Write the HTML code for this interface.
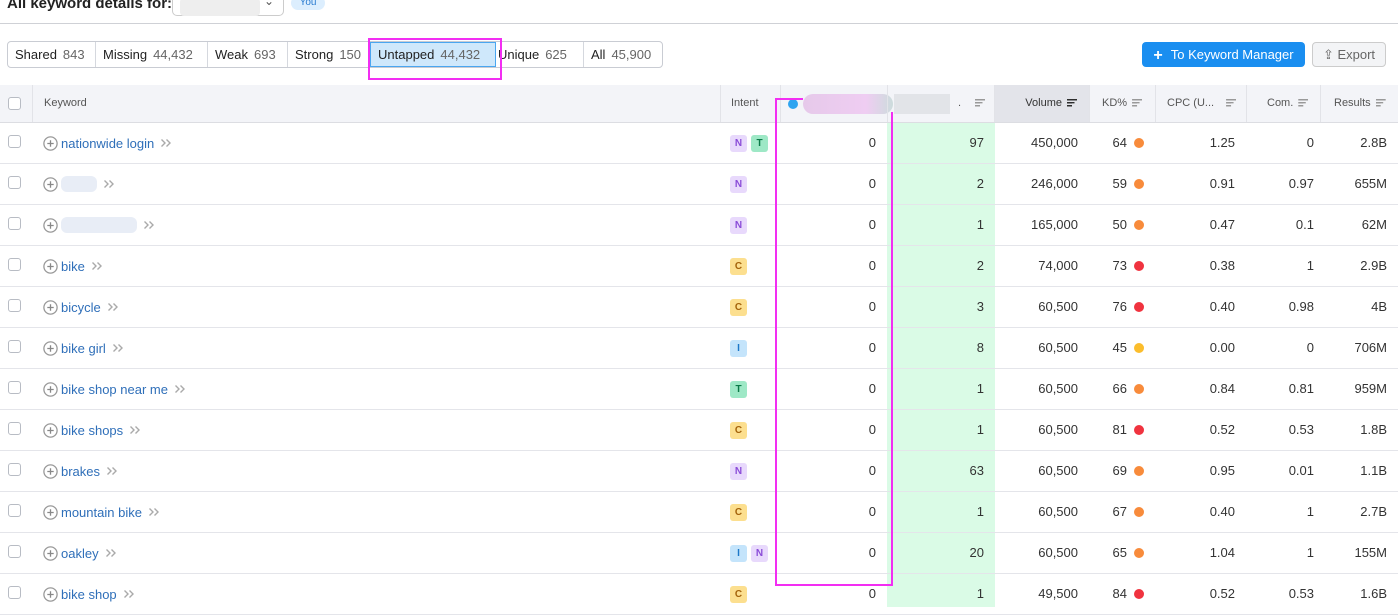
<!DOCTYPE html><html><head><style>
*{box-sizing:border-box;margin:0;padding:0}
body{width:1398px;height:607px;overflow:hidden;background:#fff;font-family:"Liberation Sans",sans-serif;font-size:13px;color:#333;position:relative}
.a{position:absolute}
.tabs{left:7px;top:41px;height:27px;border:1px solid #c9ccd3;border-radius:4px;background:#fff;width:656px}
.tab{position:absolute;top:0;height:25px;line-height:25px;border-right:1px solid #d5d8de;color:#222;white-space:nowrap;padding-left:7px}
.tab span{color:#666;margin-left:6px}
.tab.act{background:#cfe8fb;border:1px solid #4aa6f0;top:0;height:25px;line-height:23px}
.hdr{left:0;top:85px;width:1398px;height:38px;background:#f3f4f8;border-bottom:1px solid #dcdde2}
.hc{position:absolute;top:0;height:37px;line-height:37px;font-size:11px;color:#555;border-left:1px solid #e2e3e8}
.row{position:absolute;left:0;width:1398px;height:41px;border-bottom:1px solid #e4e5ea}
.cb{position:absolute;left:8px;width:13px;height:13px;border:1px solid #b8bcc4;border-radius:3px;background:#fff}
.c{position:absolute;top:0;line-height:40px;text-align:right;font-size:13px;color:#333}
.kw{position:absolute;left:43px;top:0;height:40px;display:flex;align-items:center;color:#2f6fb9;font-size:13px}
.kw svg{display:block}
.b{position:absolute;top:12px;width:17px;height:17px;border-radius:3px;font-size:10px;font-weight:bold;text-align:center;line-height:17px}
.N{background:#e8d9fc;color:#8a4bd8}.T{background:#9ee8c6;color:#0b7a48}.C{background:#fcdf8f;color:#a4630b}.I{background:#c4e4fb;color:#1d78c8}
.dot{display:inline-block;width:10px;height:10px;border-radius:50%;margin-left:7px;vertical-align:-1px}
.sort{display:inline-block;width:10px;height:8px;margin-left:5px;vertical-align:-1px;background:linear-gradient(#999 0 1.5px,transparent 1.5px 3px,#999 3px 4.5px,transparent 4.5px 6px,#999 6px 7.5px,transparent 0) ;clip-path:polygon(0 0,100% 0,100% 20%,75% 20%,75% 55%,50% 55%,50% 100%,0 100%)}
</style></head><body>
<div class="a" style="left:7px;top:-5px;font-weight:bold;font-size:15px;color:#222">All keyword details for:</div>
<div class="a" style="left:172px;top:-8px;width:112px;height:24px;border:1px solid #ccc;border-radius:5px;background:#fff"></div>
<div class="a" style="left:180px;top:-2px;width:80px;height:18px;background:#eee;border-radius:4px"></div>
<div class="a" style="left:264px;top:-6px;font-size:12px;color:#555">⌄</div>
<div class="a" style="left:291px;top:-4px;width:34px;height:14px;background:#dceefe;border-radius:7px;color:#2a7bd0;font-size:10px;text-align:center;line-height:14px">You</div>
<div class="a" style="left:0;top:23px;width:1398px;height:1px;background:#cfd1d6"></div>
<div class="a tabs">
<div class="tab" style="left:0;width:88px">Shared<span>843</span></div>
<div class="tab" style="left:88px;width:112px">Missing<span>44,432</span></div>
<div class="tab" style="left:200px;width:80px">Weak<span>693</span></div>
<div class="tab" style="left:280px;width:82px">Strong<span>150</span></div>
<div class="tab act" style="left:362px;width:126px">Untapped<span>44,432</span></div>
<div class="tab" style="left:488px;width:88px;padding-left:2px">Unique<span>625</span></div>
<div class="tab" style="left:576px;width:78px;border-right:0">All<span>45,900</span></div>
</div>
<div class="a" style="left:368px;top:38px;width:134px;height:42px;border:2px solid #f22ef2"></div>
<div class="a" style="left:1142px;top:42px;width:163px;height:25px;background:#1a8ef0;border-radius:4px;color:#fff;font-size:13px;line-height:25px;text-align:center"><b style="font-size:16px;vertical-align:-1px;margin-right:8px">+</b>To Keyword Manager</div>
<div class="a" style="left:1312px;top:42px;width:74px;height:25px;background:#f3f4f6;border:1px solid #ccc;border-radius:4px;color:#666;line-height:23px;text-align:center">⇪ Export</div>
<div class="a hdr">
<div class="cb" style="top:12px"></div>
<div class="hc" style="left:32px;width:688px;padding-left:11px">Keyword</div>
<div class="hc" style="left:720px;width:60px;padding-left:10px">Intent</div>
<div class="hc" style="left:780px;width:107px"><span class="a" style="left:7px;top:14px;width:10px;height:10px;border-radius:50%;background:#2ea4f0"></span><span class="a" style="left:22px;top:9px;width:90px;height:20px;border-radius:10px;background:linear-gradient(90deg,#e6c9ea,#efcdf2 70%,#ccdcdc)"></span></div>
<div class="hc" style="left:887px;width:107px"><span class="a" style="left:6px;top:9px;width:56px;height:20px;background:#e2e4e8"></span><span class="a" style="left:70px;top:0">.</span><span class="a" style="left:82px;top:0"><span class="sort"></span></span></div>
<div class="hc" style="left:994px;width:95px;background:#e3e4ea;text-align:right;padding-right:12px;color:#333">Volume<span class="sort" style="filter:brightness(.3)"></span></div>
<div class="hc" style="left:1089px;width:66px;padding-left:12px">KD%<span class="sort"></span></div>
<div class="hc" style="left:1155px;width:91px;padding-left:11px">CPC (U...<span class="sort" style="margin-left:12px"></span></div>
<div class="hc" style="left:1246px;width:74px;padding-left:20px">Com.<span class="sort"></span></div>
<div class="hc" style="left:1320px;width:78px;padding-left:13px">Results<span class="sort"></span></div>
</div>
<div class="a" style="left:887px;top:123px;width:108px;height:484px;background:#dafbe6"></div>
<div id="rows"></div>
<div class="a" style="left:775px;top:98px;width:2px;height:488px;background:#f22ef2"></div>
<div class="a" style="left:775px;top:98px;width:28px;height:2px;background:#f22ef2"></div>
<div class="a" style="left:891px;top:112px;width:2px;height:474px;background:#f22ef2"></div>
<div class="a" style="left:775px;top:584px;width:118px;height:2px;background:#f22ef2"></div>
<script>
var d=[["nationwide login","NT",97,"450,000",64,"#f88b3b","1.25","0","2.8B"],
["","N",2,"246,000",59,"#f88b3b","0.91","0.97","655M",36],
["","N",1,"165,000",50,"#f88b3b","0.47","0.1","62M",76],
["bike","C",2,"74,000",73,"#f0333f","0.38","1","2.9B"],
["bicycle","C",3,"60,500",76,"#f0333f","0.40","0.98","4B"],
["bike girl","I",8,"60,500",45,"#fbbd2c","0.00","0","706M"],
["bike shop near me","T",1,"60,500",66,"#f88b3b","0.84","0.81","959M"],
["bike shops","C",1,"60,500",81,"#f0333f","0.52","0.53","1.8B"],
["brakes","N",63,"60,500",69,"#f88b3b","0.95","0.01","1.1B"],
["mountain bike","C",1,"60,500",67,"#f88b3b","0.40","1","2.7B"],
["oakley","IN",20,"60,500",65,"#f88b3b","1.04","1","155M"],
["bike shop","C",1,"49,500",84,"#f0333f","0.52","0.53","1.6B"]];
var pl='<svg width="15" height="15" viewBox="0 0 15 15" style="margin-right:3px"><circle cx="7.5" cy="7.5" r="6.6" fill="none" stroke="#999" stroke-width="1.3"/><path d="M4.3 7.5h6.4M7.5 4.3v6.4" stroke="#888" stroke-width="1.3"/></svg>';
var ch='<svg width="12" height="10" viewBox="0 0 12 10" style="margin-left:6px"><path d="M1.5 1.5l3.5 3.5-3.5 3.5M6.5 1.5l3.5 3.5-3.5 3.5" fill="none" stroke="#aaa" stroke-width="1.4"/></svg>';
var h="";d.forEach(function(r,i){var t=123+i*41;h+='<div class="row" style="top:'+t+'px"><div class="cb" style="top:12px"></div>';
var k=r[0]?r[0]:'<span style="display:inline-block;width:'+r[9]+'px;height:16px;background:#e8edf6;border-radius:6px"></span>';
h+='<div class="kw">'+pl+k+ch+'</div>';
for(var j=0;j<r[1].length;j++){h+='<div class="b '+r[1][j]+'" style="left:'+(730+j*21)+'px">'+r[1][j]+'</div>'}
h+='<div class="c" style="left:780px;width:96px">0</div><div class="c" style="left:887px;width:97px">'+r[2]+'</div><div class="c" style="left:994px;width:84px">'+r[3]+'</div><div class="c" style="left:1089px;width:55px">'+r[4]+'<span class="dot" style="background:'+r[5]+'"></span></div><div class="c" style="left:1155px;width:80px">'+r[6]+'</div><div class="c" style="left:1246px;width:68px">'+r[7]+'</div><div class="c" style="left:1320px;width:67px">'+r[8]+'</div></div>'});
document.getElementById("rows").innerHTML=h;
</script>
</body></html>
